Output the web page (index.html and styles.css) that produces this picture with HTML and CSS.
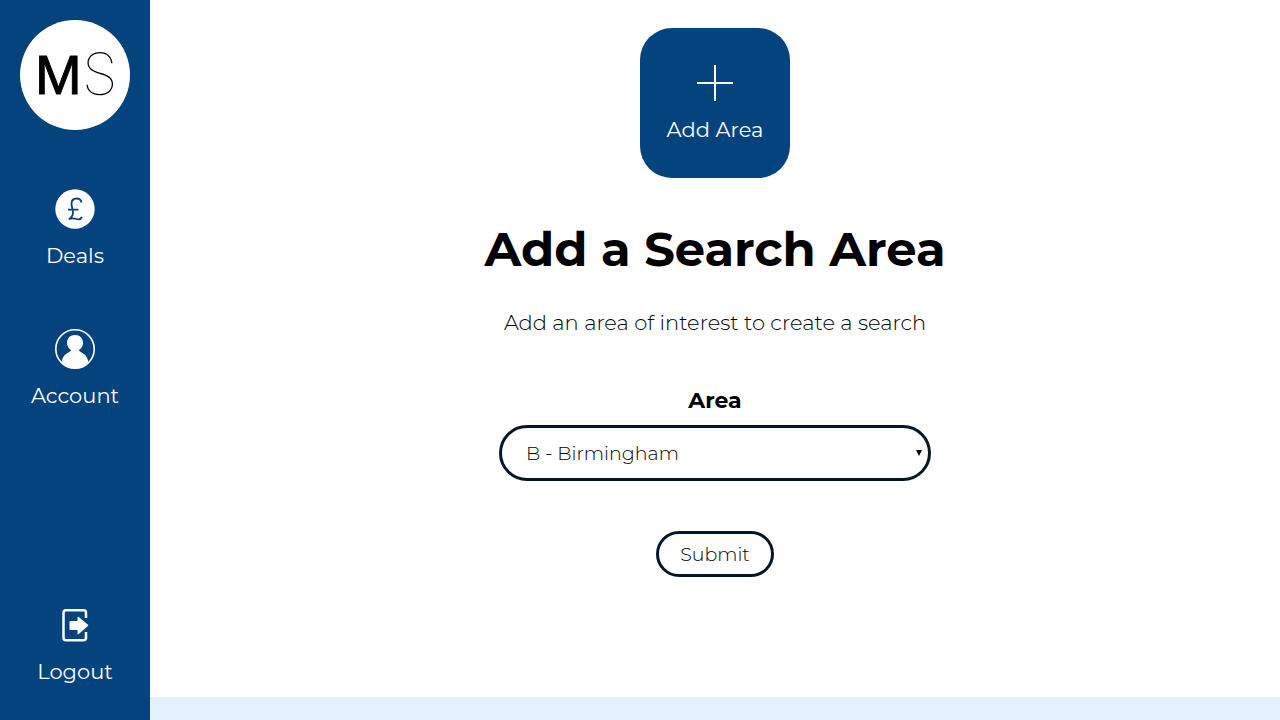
FILE: index.html
```html
<!DOCTYPE html>
<html lang="en">
  <head>
    <meta charset="UTF-8">
    <meta name="viewport" content="width=device-width, initial-scale=1">
    <title>Add a Search Area</title>
    <link rel="stylesheet" href="styles.css">
  </head>
  <body>
    <nav class="sidebar">
      <a class="logo" href="#" aria-label="Home">
        <svg viewBox="0 0 110 110" width="110" height="110">
          <circle cx="55" cy="55" r="55" fill="#fff" />
          <text class="logo-m" x="15" y="74">M</text>
          <text class="logo-s" x="62" y="75">S</text>
        </svg>
      </a>
      <a class="nav-link" href="#">
        <svg viewBox="0 0 40 40" width="40" height="40">
          <circle cx="20" cy="20" r="19.7" fill="#fff" />
          <path d="M26.500 13.500C26 10.500 24 9.500 21.500 9.500C18 9.500 16.500 12 16.500 15C16.500 18 18 20 18 23.500C18 27 16.500 28.500 13.800 30.300C16.500 28.500 19 29.200 21.500 30C24 30.800 26 30 27 28M13 20.700H23.500" fill="none" stroke="#05437f" stroke-width="1.800" />
        </svg>
        <span>Deals</span>
      </a>
      <a class="nav-link" href="#">
        <svg viewBox="0 0 40 40" width="40" height="40">
          <circle cx="20" cy="20" r="19.200" fill="none" stroke="#fff" stroke-width="1.600" />
          <path d="M20 6C15 6 12 9.500 12 14C12 17 13.500 19.500 16 21C16 22 15 22.500 13.500 23.500C9.500 25.500 7.500 28 6.500 33.500C10 37.500 14.500 39.500 20 39.500C25.500 39.500 30 37.500 33.500 33.500C32.500 28 30.500 25.500 26.500 23.500C25 22.500 24 22 24 21C26.500 19.500 28 17 28 14C28 9.500 25 6 20 6Z" fill="#fff" />
        </svg>
        <span>Account</span>
      </a>
      <a class="nav-link" href="#">
        <svg viewBox="0 0 40 40" width="40" height="40">
          <path d="M31 13V7.500Q31 5.200 28.500 5.200H11Q8.500 5.200 8.500 7.700V32.800Q8.500 35.300 11 35.300H28.500Q31 35.300 31 32.800V27" fill="none" stroke="#fff" stroke-width="2.500" />
          <path d="M14.500 17Q14.500 16 15.500 16H22.500V13Q22.500 11 24 12.300L33 19.800Q33.500 20.400 33 21L24 28.700Q22.500 30 22.500 28V25H15.500Q14.500 25 14.500 24Z" fill="#fff" />
        </svg>
        <span>Logout</span>
      </a>
    </nav>
    <main class="content">
      <button class="add-area" type="button">
        <svg viewBox="0 0 36 36" width="36" height="36">
          <path d="M18 0V36M0 18H36" stroke="#fff" stroke-width="2" />
        </svg>
        <span>Add Area</span>
      </button>
      <h1>Add a Search Area</h1>
      <p class="intro">Add an area of interest to create a search</p>
      <form class="area-form">
        <label for="area">Area</label>
        <div class="select-wrap">
          <select id="area" name="area">
            <option>B - Birmingham</option>
          </select>
        </div>
        <button class="submit" type="submit">Submit</button>
      </form>
    </main>
  </body>
</html>
```
FILE: styles.css
```css
* { box-sizing: border-box; }

body {
  margin: 0;
  min-height: 100vh;
  display: flex;
  align-items: flex-start;
  background: #e4f1fe;
  color: #000;
  font-family: Montserrat, Inter, sans-serif;
  font-size: 21px;
  line-height: 26px;
}

.sidebar {
  position: sticky;
  top: 0;
  flex: 0 0 150px;
  height: 100vh;
  padding: 20px 0 35px;
  display: flex;
  flex-direction: column;
  align-items: center;
  background: #05437f;
}

.sidebar svg { display: block; }

.logo { margin-bottom: 59px; }

.logo-m { font: 56px "Liberation Sans", sans-serif; stroke: #000; stroke-width: 1; }
.logo-s { font: 100 58px Inter, sans-serif; }

.nav-link {
  display: flex;
  flex-direction: column;
  align-items: center;
  gap: 14px;
  margin-bottom: 60px;
  color: #fff;
  text-decoration: none;
}

.nav-link:last-child {
  margin-top: auto;
  margin-bottom: 0;
}

.content {
  flex: 1;
  padding: 28px 20px 120px;
  display: flex;
  flex-direction: column;
  align-items: center;
  background: #fff;
  text-align: center;
}

.add-area {
  width: 150px;
  height: 150px;
  padding: 2px 0 0;
  display: flex;
  flex-direction: column;
  align-items: center;
  justify-content: center;
  gap: 16px;
  border: 0;
  border-radius: 32px;
  background: #05437f;
  color: #fff;
  font: inherit;
}

h1 {
  margin: 42px 0 0;
  font-size: 48px;
  font-weight: 700;
  line-height: 58px;
}

.intro {
  margin: 32px 0 0;
  font-weight: 300;
}

.area-form {
  width: 100%;
  max-width: 432px;
  margin-top: 52px;
  display: flex;
  flex-direction: column;
  align-items: center;
}

.area-form label {
  font-size: 22px;
  font-weight: 700;
}

.select-wrap {
  position: relative;
  width: 100%;
  margin: 11px 0 50px;
}

.select-wrap::after {
  content: "";
  position: absolute;
  top: 25px;
  right: 9px;
  border: 3px solid transparent;
  border-top: 6px solid #000;
  border-bottom: 0;
  pointer-events: none;
}

select,
.submit {
  border: 3px solid #061629;
  border-radius: 28px;
  background: #fff;
  color: #000;
  font-family: inherit;
  font-size: 19px;
  font-weight: 300;
}

select {
  display: block;
  width: 100%;
  height: 56px;
  padding: 0 24px;
  appearance: none;
}

.submit {
  height: 46px;
  padding: 0 21px;
}
```
